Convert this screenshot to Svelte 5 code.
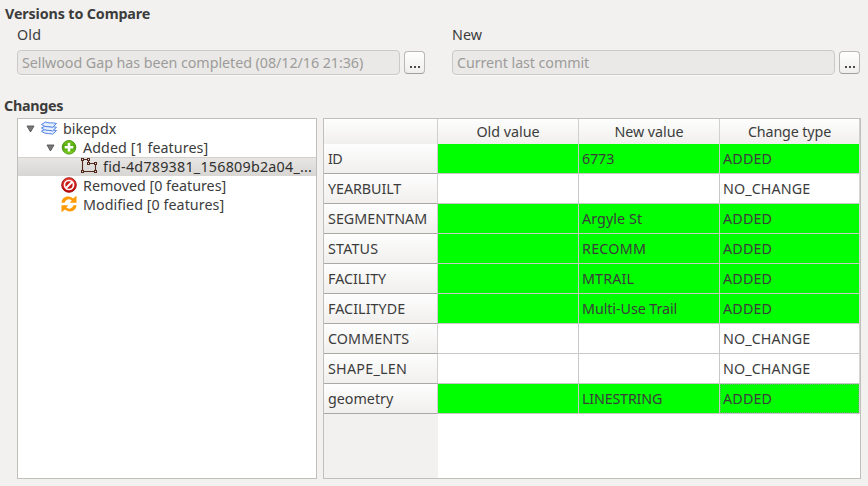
<script>
  const versions = [
    { label: 'Old', labelWidth: 24, value: 'Sellwood Gap has been completed (08/12/16 21:36)', width: 341 },
    { label: 'New', labelWidth: 30, value: 'Current last commit', width: 132 }
  ];

  const tree = [
    { level: 0, open: true, icon: 'layers', text: 'bikepdx', width: 53 },
    { level: 1, open: true, icon: 'added', text: 'Added [1 features]', width: 125 },
    { level: 2, icon: 'polygon', text: 'fid-4d789381_156809b2a04_...', width: 209, selected: true },
    { level: 1, icon: 'removed', text: 'Removed [0 features]', width: 143 },
    { level: 1, icon: 'modified', text: 'Modified [0 features]', width: 141 }
  ];

  const columns = [
    { text: '', width: 0 },
    { text: 'Old value', width: 63 },
    { text: 'New value', width: 69 },
    { text: 'Change type', width: 83 }
  ];

  const rows = [
    { name: 'ID', width: 14, value: '6773', valueWidth: 32, added: true },
    { name: 'YEARBUILT', width: 73, value: '', valueWidth: 0, added: false },
    { name: 'SEGMENTNAM', width: 99, value: 'Argyle St', valueWidth: 60, added: true },
    { name: 'STATUS', width: 50, value: 'RECOMM', valueWidth: 64, added: true },
    { name: 'FACILITY', width: 58, value: 'MTRAIL', valueWidth: 52, added: true },
    { name: 'FACILITYDE', width: 77, value: 'Multi-Use Trail', valueWidth: 95, added: true },
    { name: 'COMMENTS', width: 81, value: '', valueWidth: 0, added: false },
    { name: 'SHAPE_LEN', width: 79, value: '', valueWidth: 0, added: false },
    { name: 'geometry', width: 65, value: 'LINESTRING', valueWidth: 80, added: true, focused: true }
  ];

  // Spreads the letters of a label over the given width.
  function fit(node, width) {
    const count = node.textContent.length;
    if (!count || !width) return;
    const natural = node.getBoundingClientRect().width;
    node.style.letterSpacing = `${(width + 0.2 - natural) / count}px`;
  }
</script>

<main>
  <h2><span use:fit={145}>Versions to Compare</span></h2>
  <section class="versions">
    {#each versions as v}
      <div class="version">
        <div class="label"><span use:fit={v.labelWidth}>{v.label}</span></div>
        <div class="picker">
          <div class="field"><span use:fit={v.width}>{v.value}</span></div>
          <button aria-label="Browse"><i></i><i></i><i></i></button>
        </div>
      </div>
    {/each}
  </section>

  <h2 class="changes"><span use:fit={59}>Changes</span></h2>
  <section class="panels">
    <div class="tree">
      {#each tree as item}
        <div class="item level{item.level}" class:selected={item.selected}>
          <span class="arrow">
            {#if item.open}
              <svg width="9" height="8" viewBox="0 0 9 8"><path d="M1 1h7L4.500 7z" fill="#777" stroke="#555" stroke-width=".9" /></svg>
            {/if}
          </span>
          <svg class="icon" width="18" height="18" viewBox="0 0 18 18">
            {#if item.icon === 'layers'}
              <g fill="#e5efff" stroke="#4b7fe0" stroke-width="1" stroke-linejoin="round">
                <path d="M1.500 12.200 5.500 10c3 1.600 7 .2 11 1.500l-4 3.700C9 14 5.500 15.500 1.500 12.200z" />
                <path d="M1.500 9 5.500 6.800c3 1.600 7 .2 11 1.500l-4 3.700C9 10.800 5.500 12.300 1.500 9z" />
                <path d="M1.500 5.500 5.500 3c3 1.600 7 .2 11 1.500l-4 3.800C9 7.100 5.500 8.800 1.500 5.500z" />
              </g>
            {:else if item.icon === 'added'}
              <defs><linearGradient id="green" x2="0" y2="1"><stop stop-color="#7dc51e" /><stop offset=".5" stop-color="#4da609" /><stop offset="1" stop-color="#84d51c" /></linearGradient></defs>
              <circle cx="9" cy="9.300" r="6.800" fill="url(#green)" stroke="#448f0c" stroke-width=".9" />
              <path d="M9 5v8.600M4.700 9.300h8.600" stroke="#fff" stroke-width="2.500" />
            {:else if item.icon === 'polygon'}
              <path d="M3.500 2.500h6v4h7v8h-13z" fill="none" stroke="#52281c" stroke-width="1.100" />
              <g fill="#eadbd5" stroke="#52281c">
                {#each [[3.5, 2.5], [9.5, 2.5], [9.5, 6.5], [16.5, 6.5], [16.5, 14.5], [3.5, 14.5]] as [x, y]}
                  <rect x={x - 1} y={y - 1} width="2" height="2" />
                {/each}
              </g>
            {:else if item.icon === 'removed'}
              <defs><linearGradient id="red" x2="0" y2="1"><stop stop-color="#ee4a42" /><stop offset="1" stop-color="#b90000" /></linearGradient></defs>
              <circle cx="9" cy="9" r="7.300" fill="url(#red)" stroke="#9c0909" stroke-width=".9" />
              <circle cx="9" cy="9" r="4.500" fill="#c51a16" stroke="#fff" stroke-width="1.700" />
              <path d="m6 12 6-6" stroke="#fff" stroke-width="1.900" />
            {:else}
              <g fill="#ff9b05">
                <path d="M1.500 7.700C2 1.500 8.500-.2 13 3.400L16.500.8v6.900H9.800l2-2.300C9 3.200 5.700 4.500 4.600 7.700z" />
                <path d="M16.500 10.300C16 16.500 9.500 18.200 5 14.600L1.500 17.200v-6.900h6.700l-2 2.300C9 14.800 12.300 13.500 13.400 10.300z" />
              </g>
            {/if}
          </svg>
          <span class="name" use:fit={item.width}>{item.text}</span>
        </div>
      {/each}
    </div>

    <div class="table">
      <div class="row head">
        {#each columns as c}
          <div class="cell"><span use:fit={c.width}>{c.text}</span></div>
        {/each}
      </div>
      {#each rows as r}
        <div class="row" class:added={r.added}>
          <div class="cell key"><span use:fit={r.width}>{r.name}</span></div>
          <div class="cell"></div>
          <div class="cell"><span use:fit={r.valueWidth}>{r.value}</span></div>
          <div class="cell" class:focused={r.focused}>
            <span use:fit={r.added ? 49 : 87}>{r.added ? 'ADDED' : 'NO_CHANGE'}</span>
          </div>
        </div>
      {/each}
      <div class="rest"></div>
    </div>
  </section>
</main>

<style>
  :global(body) { background: #f2f1ef; }
  main {
    box-sizing: border-box;
    width: 868px;
    height: 486px;
    overflow: hidden;
    padding: 4px 7px 7px 4px;
    display: flex;
    flex-direction: column;
    background: #f2f1ef;
    color: #3c3c3c;
    font: 14.3px/20px "Noto Sans", "Open Sans", sans-serif;
    white-space: nowrap;
  }
  h2 { flex: none; margin: 0; padding-left: 1px; font-size: 14.3px; line-height: 20px; height: 20px; font-weight: 700; }
  h2.changes { margin-top: 21px; padding-left: 0; height: 22px; }
  .versions { display: flex; flex: none; gap: 27px; padding: 1px 0 0 13px; }
  .version { width: 408px; }
  .label { height: 24px; }
  .picker { display: flex; align-items: center; gap: 4px; margin-top: 1px; }
  .field {
    box-sizing: border-box;
    width: 383px;
    height: 25px;
    padding: 0 4px;
    border: 1px solid #cac9c7;
    border-radius: 4px;
    background: #eae9e7;
    box-shadow: 0 1px #f9f9f8;
    color: #9d9c9a;
    line-height: 24px;
  }
  button {
    box-sizing: border-box;
    width: 21px;
    height: 23px;
    padding: 0 0 5px;
    border: 1px solid #b8b7b5;
    border-bottom-color: #a09f9d;
    border-radius: 4px;
    background: linear-gradient(#fff, #efeeec);
    display: flex;
    justify-content: center;
    align-items: flex-end;
    gap: 2px;
  }
  button i { width: 2px; height: 2px; background: #4b4b4b; }
  .panels { display: flex; flex: none; gap: 6px; height: 361px; padding-left: 13px; }
  .tree { box-sizing: border-box; width: 300px; border: 1px solid #c1bfbb; background: #fff; }
  .item { display: flex; align-items: center; height: 19px; line-height: 19px; }
  .level0 { padding-left: 8px; }
  .level1 { padding-left: 28px; }
  .level2 { padding-left: 47px; }
  .selected { background: linear-gradient(#e8e7e5, #d8d6d3); box-shadow: inset 0 1px #d3d1ce; color: #303030; }
  .arrow { width: 14px; height: 8px; display: flex; }
  .icon { flex: none; align-self: flex-start; margin-right: 5px; }
  .level2 .icon { margin-right: 6px; }
  .table {
    box-sizing: border-box;
    width: 538px;
    border: 1px solid #c1bfbb;
    background: #fff;
    display: flex;
    flex-direction: column;
  }
  .row { display: grid; flex: none; grid-template-columns: 114px 141px 141px 140px; height: 30px; }
  .cell {
    box-sizing: border-box;
    border-right: 1px solid #c8c8c8;
    border-bottom: 1px solid #c8c8c8;
    padding-left: 3px;
    line-height: 29px;
  }
  .row .cell:last-child { border-right-color: #d8d6d4; }
  .added .cell:not(.key) { background: #0f0; }
  .row .key { padding-left: 4px; }
  .row .key, .row.head .cell {
    background: linear-gradient(#fefefe, #f0efed);
    border-right-color: #d1d0ce;
    border-bottom-color: #aaa8a5;
  }
  .row.head { height: 25px; }
  .head .cell { padding: 0; text-align: center; line-height: 25px; }
  .cell.focused { position: relative; }
  .cell.focused::after { content: ""; position: absolute; inset: 0; border: 1px dotted #5cb85c; }
  .rest { flex: 1; width: 114px; background: #f2f1ef; }
</style>
